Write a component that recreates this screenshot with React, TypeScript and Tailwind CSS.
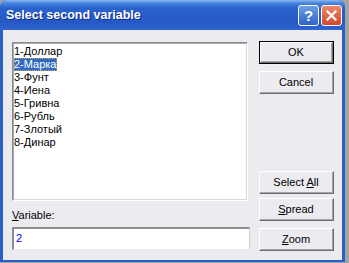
const items = ['1-Доллар', '2-Марка', '3-Фунт', '4-Иена', '5-Гривна', '6-Рубль', '7-Злотый', '8-Динар'];

function Btn({ children, def = false, mt }: { children: React.ReactNode; def?: boolean; mt: string }) {
  return (
    <div className={`${mt} w-[75px] h-[23px] ${def ? 'border border-black' : ''}`}>
      <div className="w-full h-full border-t border-l border-white border-r border-b border-r-[#6e6e6e] border-b-[#6e6e6e] bg-[#ecebef]">
        <div className="w-full h-full flex items-center justify-center border-r border-b border-[#a5a5a5] text-[11px] leading-none text-black">
          {children}
        </div>
      </div>
    </div>
  );
}

export default function App() {
  return (
    <div className="w-[349px] h-[263px] bg-[#a3a3a3] font-['Liberation_Sans',Arial,sans-serif]">
      <div className="w-[345px] h-[262px] flex flex-col rounded-t-[7px] overflow-hidden bg-[#2b5fc8]">
        {/* title bar */}
        <div className="h-[30px] shrink-0 flex items-center pl-[6px] pr-[3px] bg-[linear-gradient(to_bottom,#8ab8f0_0px,#4a86e0_3px,#2a62cc_8px,#2558c4_22px,#2a60cc_27px,#3366d0_30px)]">
          <span className="flex-1 text-white font-bold text-[12.5px] [text-shadow:1px_1px_0_#0c2a8a] pt-[1px]">
            Select second variable
          </span>
          <div className="w-[21px] h-[21px] rounded-[3px] border border-white bg-[linear-gradient(to_bottom,#6d9ee6,#2d63cc)] flex items-center justify-center text-white font-bold text-[15px] leading-none mr-[2px]">
            ?
          </div>
          <div className="w-[21px] h-[21px] rounded-[3px] border border-white bg-[linear-gradient(to_bottom,#e98a6a,#d2482c)] flex items-center justify-center">
            <svg width="11" height="11" viewBox="0 0 11 11">
              <path d="M1.5 1.5 L9.5 9.5 M9.5 1.5 L1.5 9.5" stroke="white" strokeWidth="2.2" strokeLinecap="square" />
            </svg>
          </div>
        </div>
        {/* client */}
        <div className="flex-1 mx-[3px] mb-[2px] bg-[#ecebef] flex">
          <div className="pl-[9px] pt-[12px] flex flex-col">
            <div className="w-[236px] h-[159px] border-t border-l border-[#8a8a8a] border-r border-b border-r-[#ffffff] border-b-[#ffffff]">
              <div className="w-full h-full bg-white border-t border-l border-[#a8a8a8] border-r border-b border-r-[#d8d8d8] border-b-[#d8d8d8] pt-[1px]">
                {items.map((it, i) => (
                  <div key={it} className="h-[13px] text-[11px] leading-[13px]">
                    {i === 1 ? (
                      <span className="inline-block h-[13px] bg-[#316ac5] text-white outline outline-1 outline-dotted outline-[#d9a441] -outline-offset-1 pr-[1px]">
                        {it}
                      </span>
                    ) : (
                      <span className="text-black">{it}</span>
                    )}
                  </div>
                ))}
              </div>
            </div>
            <div className="mt-[8px] text-[11px] leading-[13px] text-black">
              <span className="underline underline-offset-[1px]">V</span>ariable:
            </div>
            <div className="mt-[5px] w-[238px] h-[23px] border-t-2 border-l-2 border-[#8e8e8e] border-r border-b border-r-[#d0d0d0] border-b-[#e8e8e8] bg-white pl-[2px] text-[11px] leading-[18px] text-[#0000ff]">
              2
            </div>
          </div>
          <div className="ml-[9px] flex flex-col">
            <Btn def mt="mt-[11px]">OK</Btn>
            <Btn mt="mt-[7px]">Cancel</Btn>
            <Btn mt="mt-[77px]">
              <span>
                Select <span className="underline underline-offset-[1px]">A</span>ll
              </span>
            </Btn>
            <Btn mt="mt-[4px]">
              <span>
                <span className="underline underline-offset-[1px]">S</span>pread
              </span>
            </Btn>
            <Btn mt="mt-[7px]">
              <span>
                <span className="underline underline-offset-[1px]">Z</span>oom
              </span>
            </Btn>
          </div>
        </div>
      </div>
    </div>
  );
}
